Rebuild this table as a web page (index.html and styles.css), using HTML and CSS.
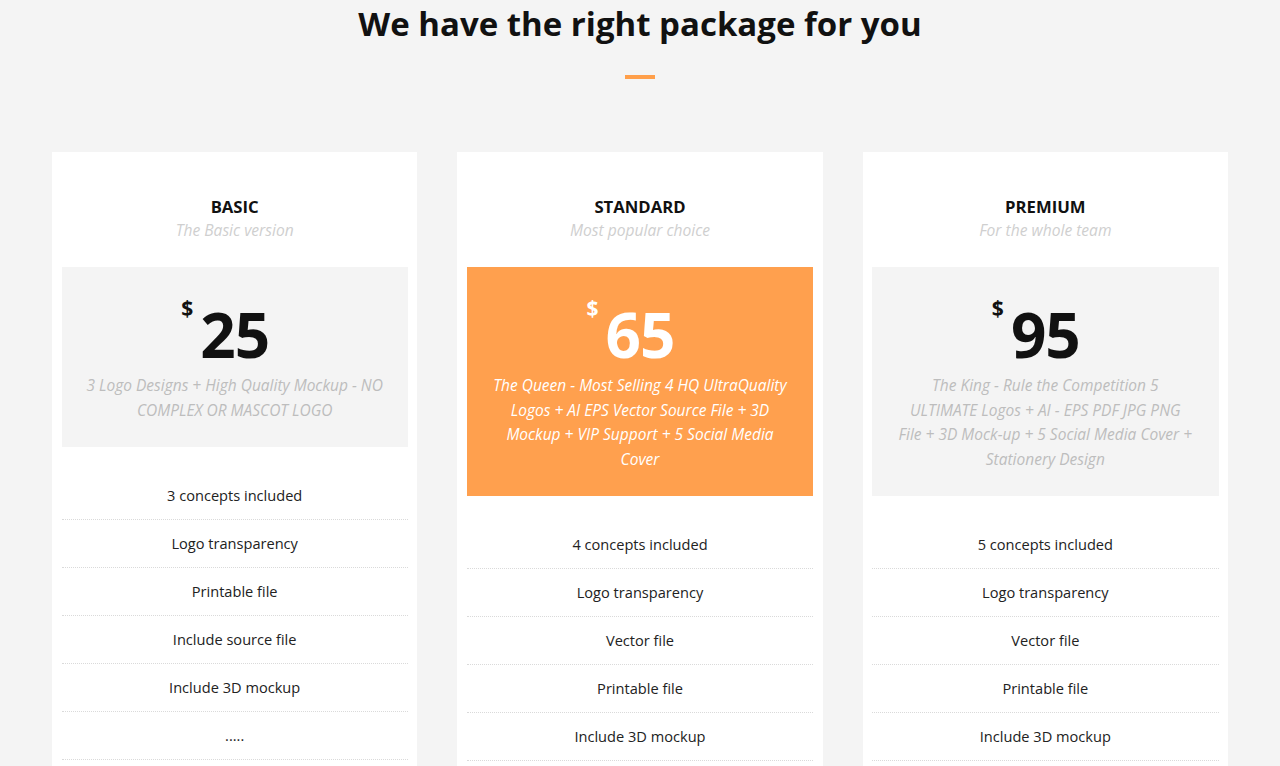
FILE: index.html
```html
<!DOCTYPE html>
<html lang="en">
<head>
<meta charset="utf-8">
<title>Pricing</title>
<link rel="stylesheet" href="styles.css">
</head>
<body>
<section class="pricing">
  <h2 class="pricing-title">We have the right package for you</h2>
  <div class="title-bar"></div>
  <div class="plans">
    <div class="plan">
      <div class="plan-head">
        <h3 class="plan-name">BASIC</h3>
        <p class="plan-sub">The Basic version</p>
      </div>
      <div class="price-box">
        <div class="price"><span class="amount"><span class="currency">$</span>25</span></div>
        <p class="price-desc">3 Logo Designs + High Quality Mockup - NO COMPLEX OR MASCOT LOGO</p>
      </div>
      <ul class="features">
        <li>3 concepts included</li>
        <li>Logo transparency</li>
        <li>Printable file</li>
        <li>Include source file</li>
        <li>Include 3D mockup</li>
        <li>.....</li>
        <li>.....</li>
      </ul>
    </div>
    <div class="plan">
      <div class="plan-head">
        <h3 class="plan-name">STANDARD</h3>
        <p class="plan-sub">Most popular choice</p>
      </div>
      <div class="price-box featured">
        <div class="price"><span class="amount"><span class="currency">$</span>65</span></div>
        <p class="price-desc">The Queen - Most Selling 4 HQ UltraQuality Logos + AI EPS Vector Source File + 3D Mockup + VIP Support + 5 Social Media Cover</p>
      </div>
      <ul class="features">
        <li>4 concepts included</li>
        <li>Logo transparency</li>
        <li>Vector file</li>
        <li>Printable file</li>
        <li>Include 3D mockup</li>
        <li>Include source file</li>
      </ul>
    </div>
    <div class="plan">
      <div class="plan-head">
        <h3 class="plan-name">PREMIUM</h3>
        <p class="plan-sub">For the whole team</p>
      </div>
      <div class="price-box">
        <div class="price"><span class="amount"><span class="currency">$</span>95</span></div>
        <p class="price-desc">The King - Rule the Competition 5 ULTIMATE Logos + AI - EPS PDF JPG PNG File + 3D Mock-up + 5 Social Media Cover + Stationery Design</p>
      </div>
      <ul class="features">
        <li>5 concepts included</li>
        <li>Logo transparency</li>
        <li>Vector file</li>
        <li>Printable file</li>
        <li>Include 3D mockup</li>
        <li>Include source file</li>
      </ul>
    </div>
  </div>
</section>
</body>
</html>
```

FILE: styles.css
```css
* { box-sizing: border-box; }

html, body {
  margin: 0;
  padding: 0;
  background: #f4f4f4;
  font-family: "Open Sans", "Noto Sans", Arial, sans-serif;
  color: #333;
}

.pricing {
  padding: 4px 52px 0;
}

.pricing-title {
  margin: 0;
  text-align: center;
  font-size: 33px;
  font-weight: 700;
  line-height: 40px;
  color: #111;
}

.title-bar {
  width: 30px;
  height: 4px;
  background: #ff9f4a;
  margin: 31px auto 0;
}

.plans {
  margin-top: 73px;
  display: grid;
  grid-template-columns: repeat(3, 1fr);
  gap: 40px;
}

.plan {
  background: #fff;
  padding: 0 9.5px 20px;
}

.plan-head {
  padding: 44px 0 26px;
  text-align: center;
}

.plan-name {
  margin: 0;
  font-size: 16.7px;
  line-height: 22px;
  font-weight: 700;
  color: #111;
}

.plan-sub {
  margin: 1px 0 0;
  font-size: 15.6px;
  line-height: 22px;
  font-style: italic;
  color: #cfcfcf;
}

.price-box {
  background: #f4f4f4;
  text-align: center;
  padding: 32px 24.5px 25px;
}

.price-box.featured {
  background: #ffa04e;
}

.price {
  display: flex;
  justify-content: center;
  color: #111;
}

.featured .price { color: #fff; }

.amount {
  position: relative;
  font-size: 62px;
  font-weight: 700;
  line-height: 70px;
  letter-spacing: -1px;
}

.currency {
  position: absolute;
  right: 100%;
  top: -3px;
  margin-right: 7px;
  font-size: 21px;
  line-height: 24px;
  letter-spacing: 0;
}

.price-desc {
  margin: 4px 0 0;
  font-size: 15.5px;
  line-height: 24.6px;
  font-style: italic;
  color: #bdbdbd;
}

.featured .price-desc { color: #fff; }

.features {
  list-style: none;
  margin: 25px 0 0;
  padding: 0;
}

.features li {
  text-align: center;
  font-size: 14.6px;
  line-height: 23px;
  padding: 12px 0;
  border-bottom: 1px dotted #dadada;
  color: #222;
}
```
